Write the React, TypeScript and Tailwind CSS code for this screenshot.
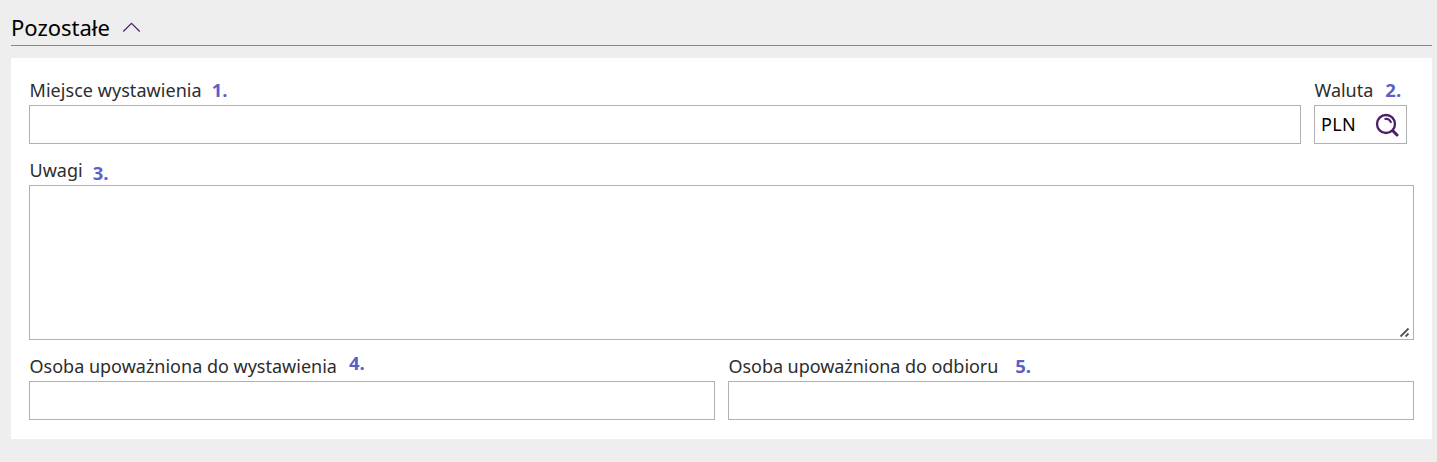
import React, { useState } from 'react';

type FieldLabelProps = {
  text: string;
  htmlFor: string;
  marker: string;
  textClass?: string;
  markerClass?: string;
};

function FieldLabel({ text, htmlFor, marker, textClass = '', markerClass = '' }: FieldLabelProps) {
  return (
    <div className="flex h-[30px] items-center whitespace-nowrap pl-[0.5px] text-[18px] leading-[30px] text-[#2d2d2d]">
      <label htmlFor={htmlFor} className={textClass}>{text}</label>
      <span className={`font-['Open_Sans',sans-serif] text-[18.5px] font-bold text-[#5b5fc7] ${markerClass}`}>
        {marker}
      </span>
    </div>
  );
}

function SearchIcon() {
  return (
    <svg width="24" height="24" viewBox="0 0 24 24" fill="none" stroke="#4b1f68" strokeLinecap="round">
      <circle cx="11" cy="11" r="9" strokeWidth="2.3" />
      <path d="M10.3 5.9c2.5-.2 4.6 1 5.6 3.2" strokeWidth="2" />
      <path d="M17.8 17.8l4.2 4.2" strokeWidth="3" />
    </svg>
  );
}

const inputClass = 'block h-[39px] w-full border border-[#b0b0b0] bg-white px-[7px] text-[18px] text-black outline-none';

export default function App() {
  const [open, setOpen] = useState(true);
  const [currency, setCurrency] = useState('PLN');

  return (
    <div className="min-h-screen bg-[#eeeeee] pl-[11px] pr-[5px] font-['Noto_Sans',sans-serif]">
      <button
        type="button"
        onClick={() => setOpen(!open)}
        className="flex h-[46px] w-full items-center border-b border-[#868686] pt-[10px] text-left text-black"
      >
        <span className="w-[99px] whitespace-nowrap pb-[2px] text-[22px] leading-[32px]">Pozostałe</span>
        <svg
          className={`ml-[12px] ${open ? '' : 'rotate-180'}`}
          width="19"
          height="11"
          viewBox="0 0 19 11"
          fill="none"
          stroke="#4b1f68"
          strokeWidth="1.2"
        >
          <path d="M1.3 9.5L9.5 1.3l8.2 8.2" />
        </svg>
      </button>

      {open && (
        <div className="mt-3 h-[381px] bg-white px-[18px] pt-[17px]">
          {/* miejsce + waluta */}
          <div className="flex gap-[13px]">
            <div className="w-[1272px]">
              <FieldLabel text="Miejsce wystawienia" htmlFor="place" marker="1." textClass="tracking-[0.05px]" markerClass="ml-[10px]" />
              <input id="place" className={inputClass} />
            </div>
            <div className="w-[93px]">
              <FieldLabel text="Waluta" htmlFor="currency" marker="2." markerClass="ml-[12px]" />
              <div className="flex h-[39px] items-center border border-[#b0b0b0] pl-[6px] pr-[7px]">
                <input
                  id="currency"
                  value={currency}
                  onChange={(e) => setCurrency(e.target.value)}
                  className="w-[54px] bg-transparent text-[18px] tracking-[0.3px] text-black outline-none"
                />
                <SearchIcon />
              </div>
            </div>
          </div>

          {/* uwagi */}
          <div className="mt-[11px] w-[1385px]">
            <FieldLabel text="Uwagi" htmlFor="notes" marker="3." markerClass="ml-[10px] relative top-[3px]" />
            <div className="relative">
              <textarea
                id="notes"
                className="block h-[155px] w-full resize-none border border-[#b0b0b0] bg-white p-[7px] text-[18px] outline-none"
              />
              <svg
                className="pointer-events-none absolute bottom-[2px] right-[4px]"
                width="11"
                height="11"
                viewBox="0 0 11 11"
                stroke="#555"
                strokeWidth="1.8"
              >
                <path d="M1.5 9.5l8-8M6.5 9.5l3-3" />
              </svg>
            </div>
          </div>

          {/* osoby upoważnione */}
          <div className="mt-[11px] flex w-[1385px] gap-[13px]">
            <div className="flex-1">
              <FieldLabel text="Osoba upoważniona do wystawienia" htmlFor="issuer" marker="4." markerClass="ml-[12px] relative top-[-3px]" />
              <input id="issuer" className={inputClass} />
            </div>
            <div className="flex-1">
              <FieldLabel text="Osoba upoważniona do odbioru" htmlFor="receiver" marker="5." textClass="tracking-[-0.05px]" markerClass="ml-[17px]" />
              <input id="receiver" className={inputClass} />
            </div>
          </div>
        </div>
      )}
    </div>
  );
}
